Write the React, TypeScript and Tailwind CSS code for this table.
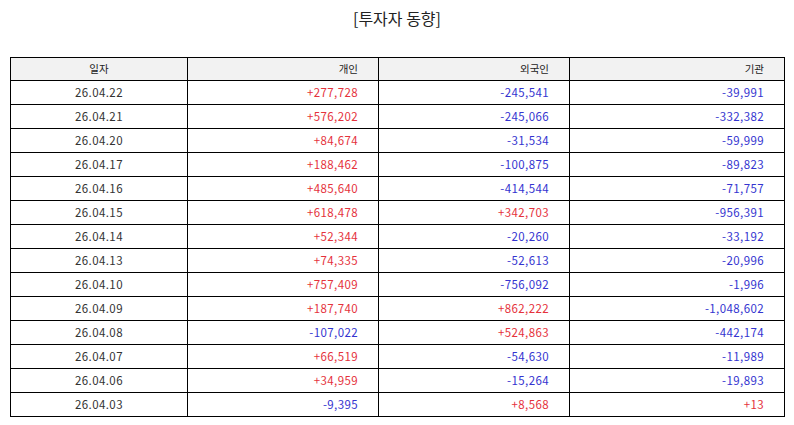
const rows: [string, string, string, string][] = [
  ["26.04.22", "+277,728", "-245,541", "-39,991"],
  ["26.04.21", "+576,202", "-245,066", "-332,382"],
  ["26.04.20", "+84,674", "-31,534", "-59,999"],
  ["26.04.17", "+188,462", "-100,875", "-89,823"],
  ["26.04.16", "+485,640", "-414,544", "-71,757"],
  ["26.04.15", "+618,478", "+342,703", "-956,391"],
  ["26.04.14", "+52,344", "-20,260", "-33,192"],
  ["26.04.13", "+74,335", "-52,613", "-20,996"],
  ["26.04.10", "+757,409", "-756,092", "-1,996"],
  ["26.04.09", "+187,740", "+862,222", "-1,048,602"],
  ["26.04.08", "-107,022", "+524,863", "-442,174"],
  ["26.04.07", "+66,519", "-54,630", "-11,989"],
  ["26.04.06", "+34,959", "-15,264", "-19,893"],
  ["26.04.03", "-9,395", "+8,568", "+13"],
];

function Num({ v }: { v: string }) {
  const up = v.startsWith("+");
  return (
    <td className={`border border-black pr-[20px] text-right ${up ? "text-[#e5323c]" : "text-[#3434d0]"}`}>
      {v}
    </td>
  );
}

export default function App() {
  return (
    <div
      className="w-[794px] h-[425px] bg-white text-[#333] pt-[6px]"
      style={{ fontFamily: '"Noto Sans CJK KR", "Noto Sans", sans-serif' }}
    >
      <h1 className="text-center text-[16px] leading-[24px] text-[#222]">[투자자 동향]</h1>

      <table className="ml-[10px] mt-[27px] w-[775px] border-collapse text-[11.5px] tracking-[0.4px] table-fixed">
        <colgroup>
          <col className="w-[177px]" />
          <col className="w-[191px]" />
          <col className="w-[191px]" />
          <col />
        </colgroup>
        <thead>
          <tr className="h-[23px] bg-[#f2f2f2] text-[#222] text-[10.5px] tracking-normal">
            <th className="border border-black font-normal text-center">일자</th>
            <th className="border border-black font-normal text-right pr-[20px]">개인</th>
            <th className="border border-black font-normal text-right pr-[20px]">외국인</th>
            <th className="border border-black font-normal text-right pr-[20px]">기관</th>
          </tr>
        </thead>
        <tbody>
          {rows.map((r) => (
            <tr key={r[0]} className="h-[24px]">
              <td className="border border-black text-center">{r[0]}</td>
              <Num v={r[1]} />
              <Num v={r[2]} />
              <Num v={r[3]} />
            </tr>
          ))}
        </tbody>
      </table>
    </div>
  );
}
